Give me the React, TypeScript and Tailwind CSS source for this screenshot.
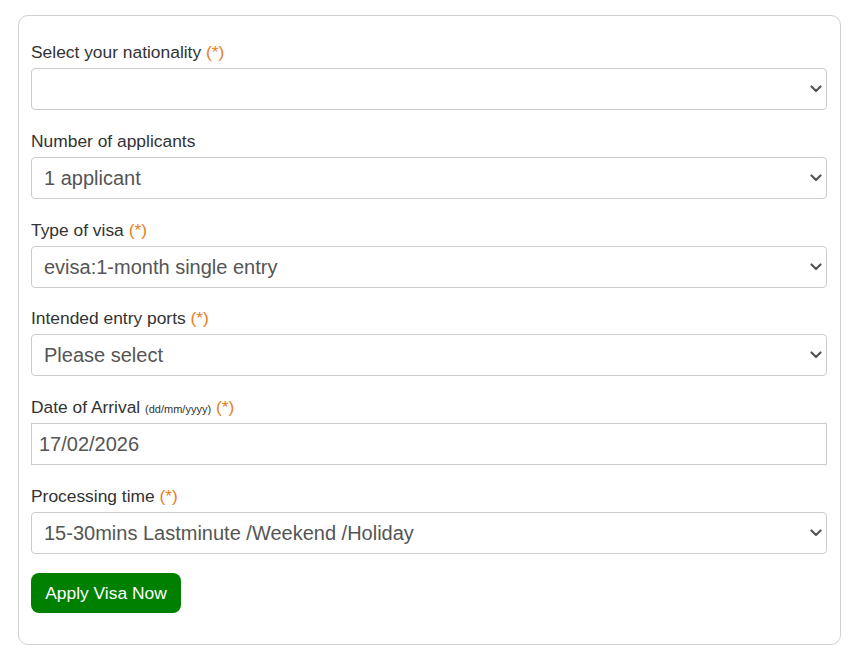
import React from "react";

const Chevron = () => (
  <svg
    className="pointer-events-none absolute right-[5px] top-1/2 -translate-y-1/2"
    width="12"
    height="8"
    viewBox="0 0 12 8"
    fill="none"
  >
    <path d="M1.5 1.5 L6 6 L10.5 1.5" stroke="#555" strokeWidth="2.2" strokeLinecap="round" strokeLinejoin="round" />
  </svg>
);

const Req = () => <span className="text-[#e67e22]"> (*)</span>;

const labelCls = "block h-[25.5px] pt-[1px] text-[17.4px] leading-[24px] mb-[3.5px] text-[#333]";

function SelectField({
  label,
  required,
  value,
  options,
}: {
  label: React.ReactNode;
  required?: boolean;
  value: string;
  options: string[];
}) {
  return (
    <div className="mb-[17.8px]">
      <label className={labelCls}>
        {label}
        {required && <Req />}
      </label>
      <div className="relative">
        <select
          defaultValue={value}
          className="block w-full h-[42px] appearance-none rounded-[4px] border border-[#ccc] bg-white pl-[12px] pr-[30px] text-[20px] text-[#555] outline-none"
          style={{ fontFamily: '"Liberation Sans", Arial, sans-serif' }}
        >
          {options.map((o) => (
            <option key={o} value={o}>
              {o}
            </option>
          ))}
        </select>
        <Chevron />
      </div>
    </div>
  );
}

export default function App() {
  return (
    <div
      className="bg-white min-h-[648px] pt-[15px] pl-[18px]"
      style={{ fontFamily: '"Liberation Sans", Arial, sans-serif' }}
    >
      <div className="w-[823px] rounded-[10px] border border-[#d0d0d0] pt-[23px] pb-[31px] pl-[12px] pr-[13px]">
        <SelectField label="Select your nationality" required value="" options={[""]} />
        <SelectField label="Number of applicants" value="1 applicant" options={["1 applicant"]} />
        <SelectField
          label="Type of visa"
          required
          value="evisa:1-month single entry"
          options={["evisa:1-month single entry"]}
        />
        <SelectField label="Intended entry ports" required value="Please select" options={["Please select"]} />
        <div className="mb-[17.8px]">
          <label className={labelCls}>
            Date of Arrival <span className="text-[11px] leading-none">(dd/mm/yyyy)</span>
            <Req />
          </label>
          <input
            type="text"
            defaultValue="17/02/2026"
            className="block w-full h-[42px] border border-[#ccc] bg-white px-[7px] text-[20px] text-[#555] outline-none"
            style={{ fontFamily: '"Liberation Sans", Arial, sans-serif' }}
          />
        </div>
        <SelectField
          label="Processing time"
          required
          value="15-30mins Lastminute /Weekend /Holiday"
          options={["15-30mins Lastminute /Weekend /Holiday"]}
        />
        <button
          type="button"
          className="mt-[1px] h-[40px] w-[150px] rounded-[8px] bg-[#008000] text-[17.4px] text-white"
        >
          Apply Visa Now
        </button>
      </div>
    </div>
  );
}
